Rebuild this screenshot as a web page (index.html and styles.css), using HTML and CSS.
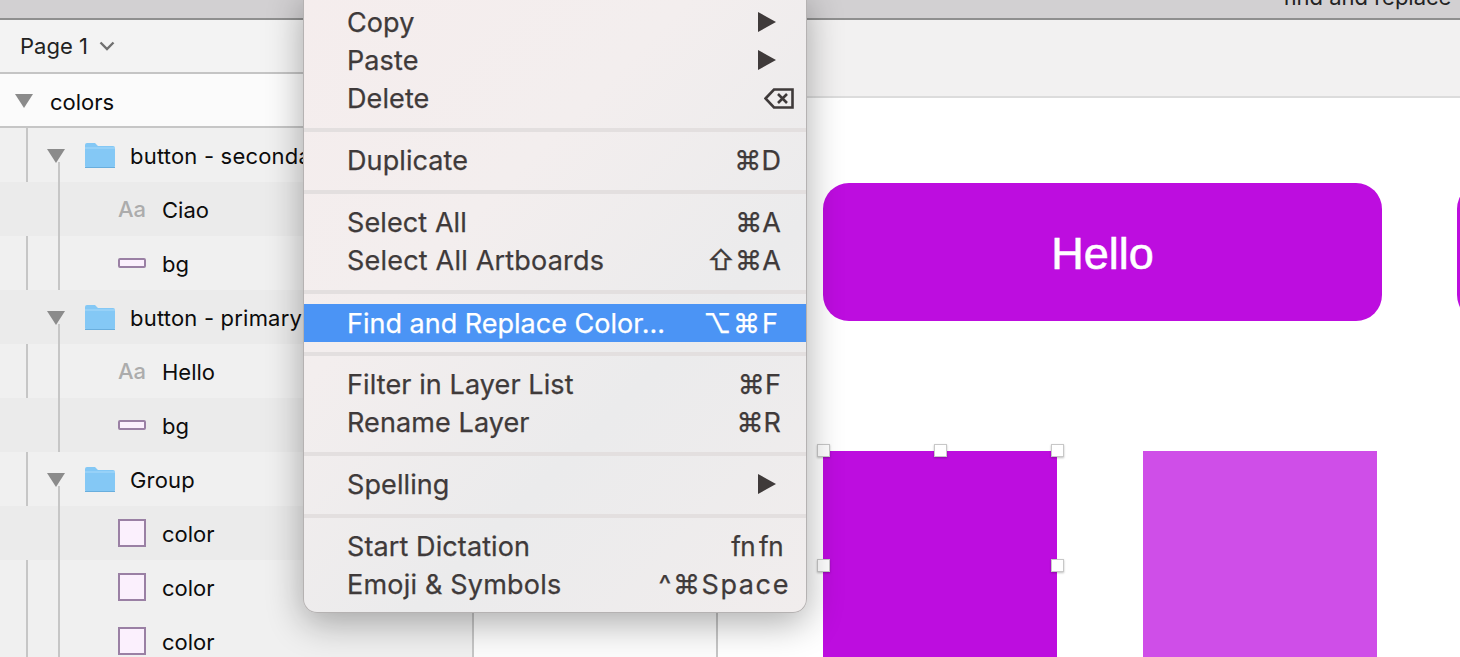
FILE: index.html
```html
<!DOCTYPE html>
<html lang="en">
<head>
    <meta charset="UTF-8">
    <title>find and replace</title>
    <link rel="stylesheet" href="styles.css">
</head>
<body>
    <div class="titlebar"><span class="doc-title">find and replace</span></div>
    <div class="workspace">
        <aside class="sidebar">
            <div class="page-bar">
                <span>Page 1</span>
                <svg class="chevron" width="16" height="10" viewBox="0 0 16 10"><path d="M1.500 1.500 8 8l6.500-6.500" fill="none" stroke="#707070" stroke-width="2.400"/></svg>
            </div>
            <div class="layer root"><i class="tri"></i><span>colors</span></div>
            <div class="layers">
                <div class="layer group"><i class="tri"></i><svg class="folder" width="30" height="25" viewBox="0 0 30 25"><path d="M0 2q0-2 2-2h8l3 3h15q2 0 2 2v18q0 2-2 2H2q-2 0-2-2z" fill="#84c8f5"/><path d="M0 5h30" stroke="#a9dafa"/><path d="M0 24.500h30" stroke="#69aedd"/></svg><span>button - secondary</span></div>
                <div class="layer child dark"><b class="aa">Aa</b><span>Ciao</span></div>
                <div class="layer child last"><i class="pill"></i><span>bg</span></div>
                <div class="layer group dark"><i class="tri"></i><svg class="folder" width="30" height="25" viewBox="0 0 30 25"><path d="M0 2q0-2 2-2h8l3 3h15q2 0 2 2v18q0 2-2 2H2q-2 0-2-2z" fill="#84c8f5"/><path d="M0 5h30" stroke="#a9dafa"/><path d="M0 24.500h30" stroke="#69aedd"/></svg><span>button - primary</span></div>
                <div class="layer child"><b class="aa">Aa</b><span>Hello</span></div>
                <div class="layer child last dark"><i class="pill"></i><span>bg</span></div>
                <div class="layer group"><i class="tri"></i><svg class="folder" width="30" height="25" viewBox="0 0 30 25"><path d="M0 2q0-2 2-2h8l3 3h15q2 0 2 2v18q0 2-2 2H2q-2 0-2-2z" fill="#84c8f5"/><path d="M0 5h30" stroke="#a9dafa"/><path d="M0 24.500h30" stroke="#69aedd"/></svg><span>Group</span></div>
                <div class="layer child dark"><i class="swatch"></i><span>color</span></div>
                <div class="layer child"><i class="swatch"></i><span>color</span></div>
                <div class="layer child"><i class="swatch"></i><span>color</span></div>
            </div>
        </aside>
        <div class="middle">
            <div class="middle-top"></div>
        </div>
        <main class="canvas-wrap">
            <div class="canvas-top"></div>
            <div class="canvas">
                <div class="hello">Hello</div>
                <div class="hello-next"></div>
                <div class="block selected">
                    <i class="handle tl"></i><i class="handle tc"></i><i class="handle tr"></i>
                    <i class="handle ml"></i><i class="handle mr"></i>
                </div>
                <div class="block light"></div>
            </div>
        </main>
    </div>

    <div class="menu">
        <div class="item"><span>Copy</span><i class="arrow"></i></div>
        <div class="item"><span>Paste</span><i class="arrow"></i></div>
        <div class="item"><span>Delete</span>
            <svg class="backspace" width="30" height="21" viewBox="0 0 30 21"><path d="M1.500 10.500 10 1.500h18.500v18H10z M14 6l9 9M23 6l-9 9" fill="none" stroke="#3f3a3a" stroke-width="2.600"/></svg>
        </div>
        <hr>
        <div class="item"><span>Duplicate</span><kbd>⌘D</kbd></div>
        <hr>
        <div class="item"><span>Select All</span><kbd>⌘A</kbd></div>
        <div class="item long"><span>Select All Artboards</span><kbd>⇧⌘A</kbd></div>
        <hr class="before-active">
        <div class="item active"><span>Find and Replace Color...</span><kbd class="alt">⌥⌘F</kbd></div>
        <hr class="after-active">
        <div class="item"><span>Filter in Layer List</span><kbd>⌘F</kbd></div>
        <div class="item"><span>Rename Layer</span><kbd>⌘R</kbd></div>
        <hr>
        <div class="item"><span>Spelling</span><i class="arrow"></i></div>
        <hr>
        <div class="item"><span>Start Dictation</span><kbd class="fn">fn fn</kbd></div>
        <div class="item long"><span>Emoji &amp; Symbols</span><kbd class="wide">^⌘Space</kbd></div>
    </div>
</body>
</html>
```

FILE: styles.css
```css
html, body {
    margin: 0;
    height: 657px;
    overflow: hidden;
}

body {
    position: relative;
    display: flex;
    flex-direction: column;
    background: #fff;
    font-family: Inter, "Noto Sans", sans-serif;
    color: #111;
}

.titlebar {
    flex: none;
    height: 18px;
    background: #d2d0d2;
    border-bottom: 2px solid #8f8f8f;
    position: relative;
    overflow: hidden;
}

.doc-title {
    position: absolute;
    left: 1283px;
    top: -16px;
    font-size: 22px;
    white-space: nowrap;
    color: #222;
}

.workspace {
    flex: 1;
    display: flex;
    min-height: 0;
}

/* layer list */
.sidebar {
    flex: none;
    width: 472px;
    background: #f0f0f0;
    border-right: 2px solid #c6c6c6;
    overflow: hidden;
}

.page-bar {
    height: 52px;
    display: flex;
    align-items: center;
    gap: 11px;
    padding-left: 20px;
    background: #f3f3f3;
    border-bottom: 2px solid #c4c4c4;
    font-size: 22px;
    color: #222;
}

.layer {
    height: 54px;
    display: flex;
    align-items: center;
    font-size: 22px;
    white-space: nowrap;
    box-sizing: border-box;
    color: #0c0c0c;
}

.layer span {
    padding-top: 2px;
}

.layer.root {
    height: 54px;
    background: #fbfbfb;
    border-bottom: 2px solid #c6c6c6;
    padding-left: 15px;
}

.root span {
    padding-top: 4px;
}

.root .tri {
    margin-right: 17px;
}

.layers {
    position: relative;
    background: #f0f0f0;
}

.layers::before {
    content: "";
    position: absolute;
    left: 26px;
    top: 0;
    bottom: 0;
    width: 2px;
    background: #c6c6c6;
}

.dark {
    background: #ebebeb;
}

.group {
    position: relative;
    padding-left: 47px;
    letter-spacing: 0.2px;
}

.group .tri {
    margin-right: 20px;
}

.group::before {
    content: "";
    position: absolute;
    left: 58px;
    top: 34px;
    bottom: 0;
    width: 2px;
    background: #c6c6c6;
}

.folder {
    flex: none;
    margin-right: 15px;
}

.child {
    position: relative;
    padding-left: 118px;
}

.child::before {
    content: "";
    position: absolute;
    left: 58px;
    top: 0;
    bottom: 0;
    width: 2px;
    background: #c6c6c6;
}

.tri {
    flex: none;
    width: 0;
    height: 0;
    margin-top: 2px;
    border-left: 9px solid transparent;
    border-right: 9px solid transparent;
    border-top: 14px solid #8b8b8b;
    position: relative;
    z-index: 1;
}

.aa {
    width: 28px;
    margin-right: 16px;
    font-weight: 500;
    font-size: 22px;
    color: #acacac;
}

.pill {
    width: 24px;
    height: 6px;
    margin-right: 16px;
    border: 2px solid #9a80a4;
    border-radius: 2px;
    background: #fbf0fd;
}

.swatch {
    width: 24px;
    height: 24px;
    margin-right: 16px;
    border: 2px solid #9a80a4;
    background: #fbf0fd;
}

/* strip behind the menu */
.middle {
    flex: none;
    width: 242px;
    background: #fcfcfc;
    border-right: 2px solid #c6c6c6;
}

.middle-top {
    height: 77px;
    background: #f2f2f2;
    border-bottom: 2px solid #dcdcdc;
}

.canvas-wrap {
    flex: 1;
    min-width: 0;
    display: flex;
    flex-direction: column;
}

.canvas-top {
    flex: none;
    height: 76px;
    background: #f2f1f1;
    border-bottom: 2px solid #dcdcdc;
}

.canvas {
    flex: 1;
    position: relative;
    background: #fff;
    overflow: hidden;
}

.hello {
    position: absolute;
    left: 105px;
    top: 85px;
    width: 559px;
    height: 138px;
    padding-top: 3px;
    box-sizing: border-box;
    border-radius: 26px;
    background: #bd0ddf;
    color: #fff;
    font-family: "Liberation Sans", sans-serif;
    font-size: 45px;
    -webkit-text-stroke: 0.6px #fff;
    display: flex;
    align-items: center;
    justify-content: center;
}

.hello-next {
    position: absolute;
    left: 739px;
    top: 85px;
    width: 60px;
    height: 138px;
    border-radius: 26px 0 0 26px;
    background: #fff;
    border: 3px solid #bd0ddf;
    border-right: none;
    box-sizing: border-box;
}

.block {
    position: absolute;
    top: 353px;
    width: 234px;
    height: 220px;
    background: #bd0ddf;
}

.block.selected {
    left: 105px;
}

.block.light {
    left: 425px;
    background: #cf4ee8;
}

.handle {
    position: absolute;
    width: 11px;
    height: 11px;
    background: #fff;
    border: 1px solid #c8c8c8;
    box-shadow: 0 1px 2px rgba(0, 0, 0, 0.25);
}

.tl { left: -6px; top: -7px; }
.tc { left: 111px; top: -7px; }
.tr { left: 228px; top: -7px; }
.ml { left: -6px; top: 108px; }
.mr { left: 228px; top: 108px; }

/* context menu */
.menu {
    position: absolute;
    left: 303px;
    top: -8px;
    width: 504px;
    height: 621px;
    box-sizing: border-box;
    padding-top: 11px;
    background: linear-gradient(135deg, #f5eded 0%, #f3eeee 35%, #ebebec 65%, #f1eded 100%);
    border: 1px solid #b5b2b2;
    border-top: none;
    border-radius: 0 0 14px 14px;
    box-shadow: 0 10px 36px rgba(0, 0, 0, 0.32);
    color: #3f3a3a;
    font-size: 27px;
    letter-spacing: 0.1px;
    -webkit-text-stroke: 0.25px currentColor;
    z-index: 2;
}

.menu hr {
    height: 4px;
    margin: 11px 0 9px;
    border: 0;
    background: #e3dfdf;
}

.menu hr.before-active {
    margin-bottom: 10px;
}

.menu hr.after-active {
    margin-top: 10px;
}

.item {
    height: 38px;
    display: flex;
    align-items: center;
    justify-content: space-between;
    padding: 0 25px 0 43px;
    white-space: nowrap;
}

.item.long {
    letter-spacing: 0.2px;
}

.item.active {
    background: #4b94f5;
    color: #fff;
    letter-spacing: 0;
}

.item kbd {
    font-family: inherit;
    font-size: 27px;
}

.item kbd.alt {
    letter-spacing: 2px;
    margin-right: 1px;
}

.item kbd.fn {
    font-size: 26px;
    letter-spacing: -0.5px;
    word-spacing: -3px;
    margin-right: -2px;
}

.item kbd.wide {
    letter-spacing: 1.6px;
    margin-right: -9px;
}

.arrow {
    width: 0;
    height: 0;
    margin-right: 5px;
    border-left: 18px solid #3f3a3a;
    border-top: 10px solid transparent;
    border-bottom: 10px solid transparent;
}

.backspace {
    margin-right: -13px;
}
```
